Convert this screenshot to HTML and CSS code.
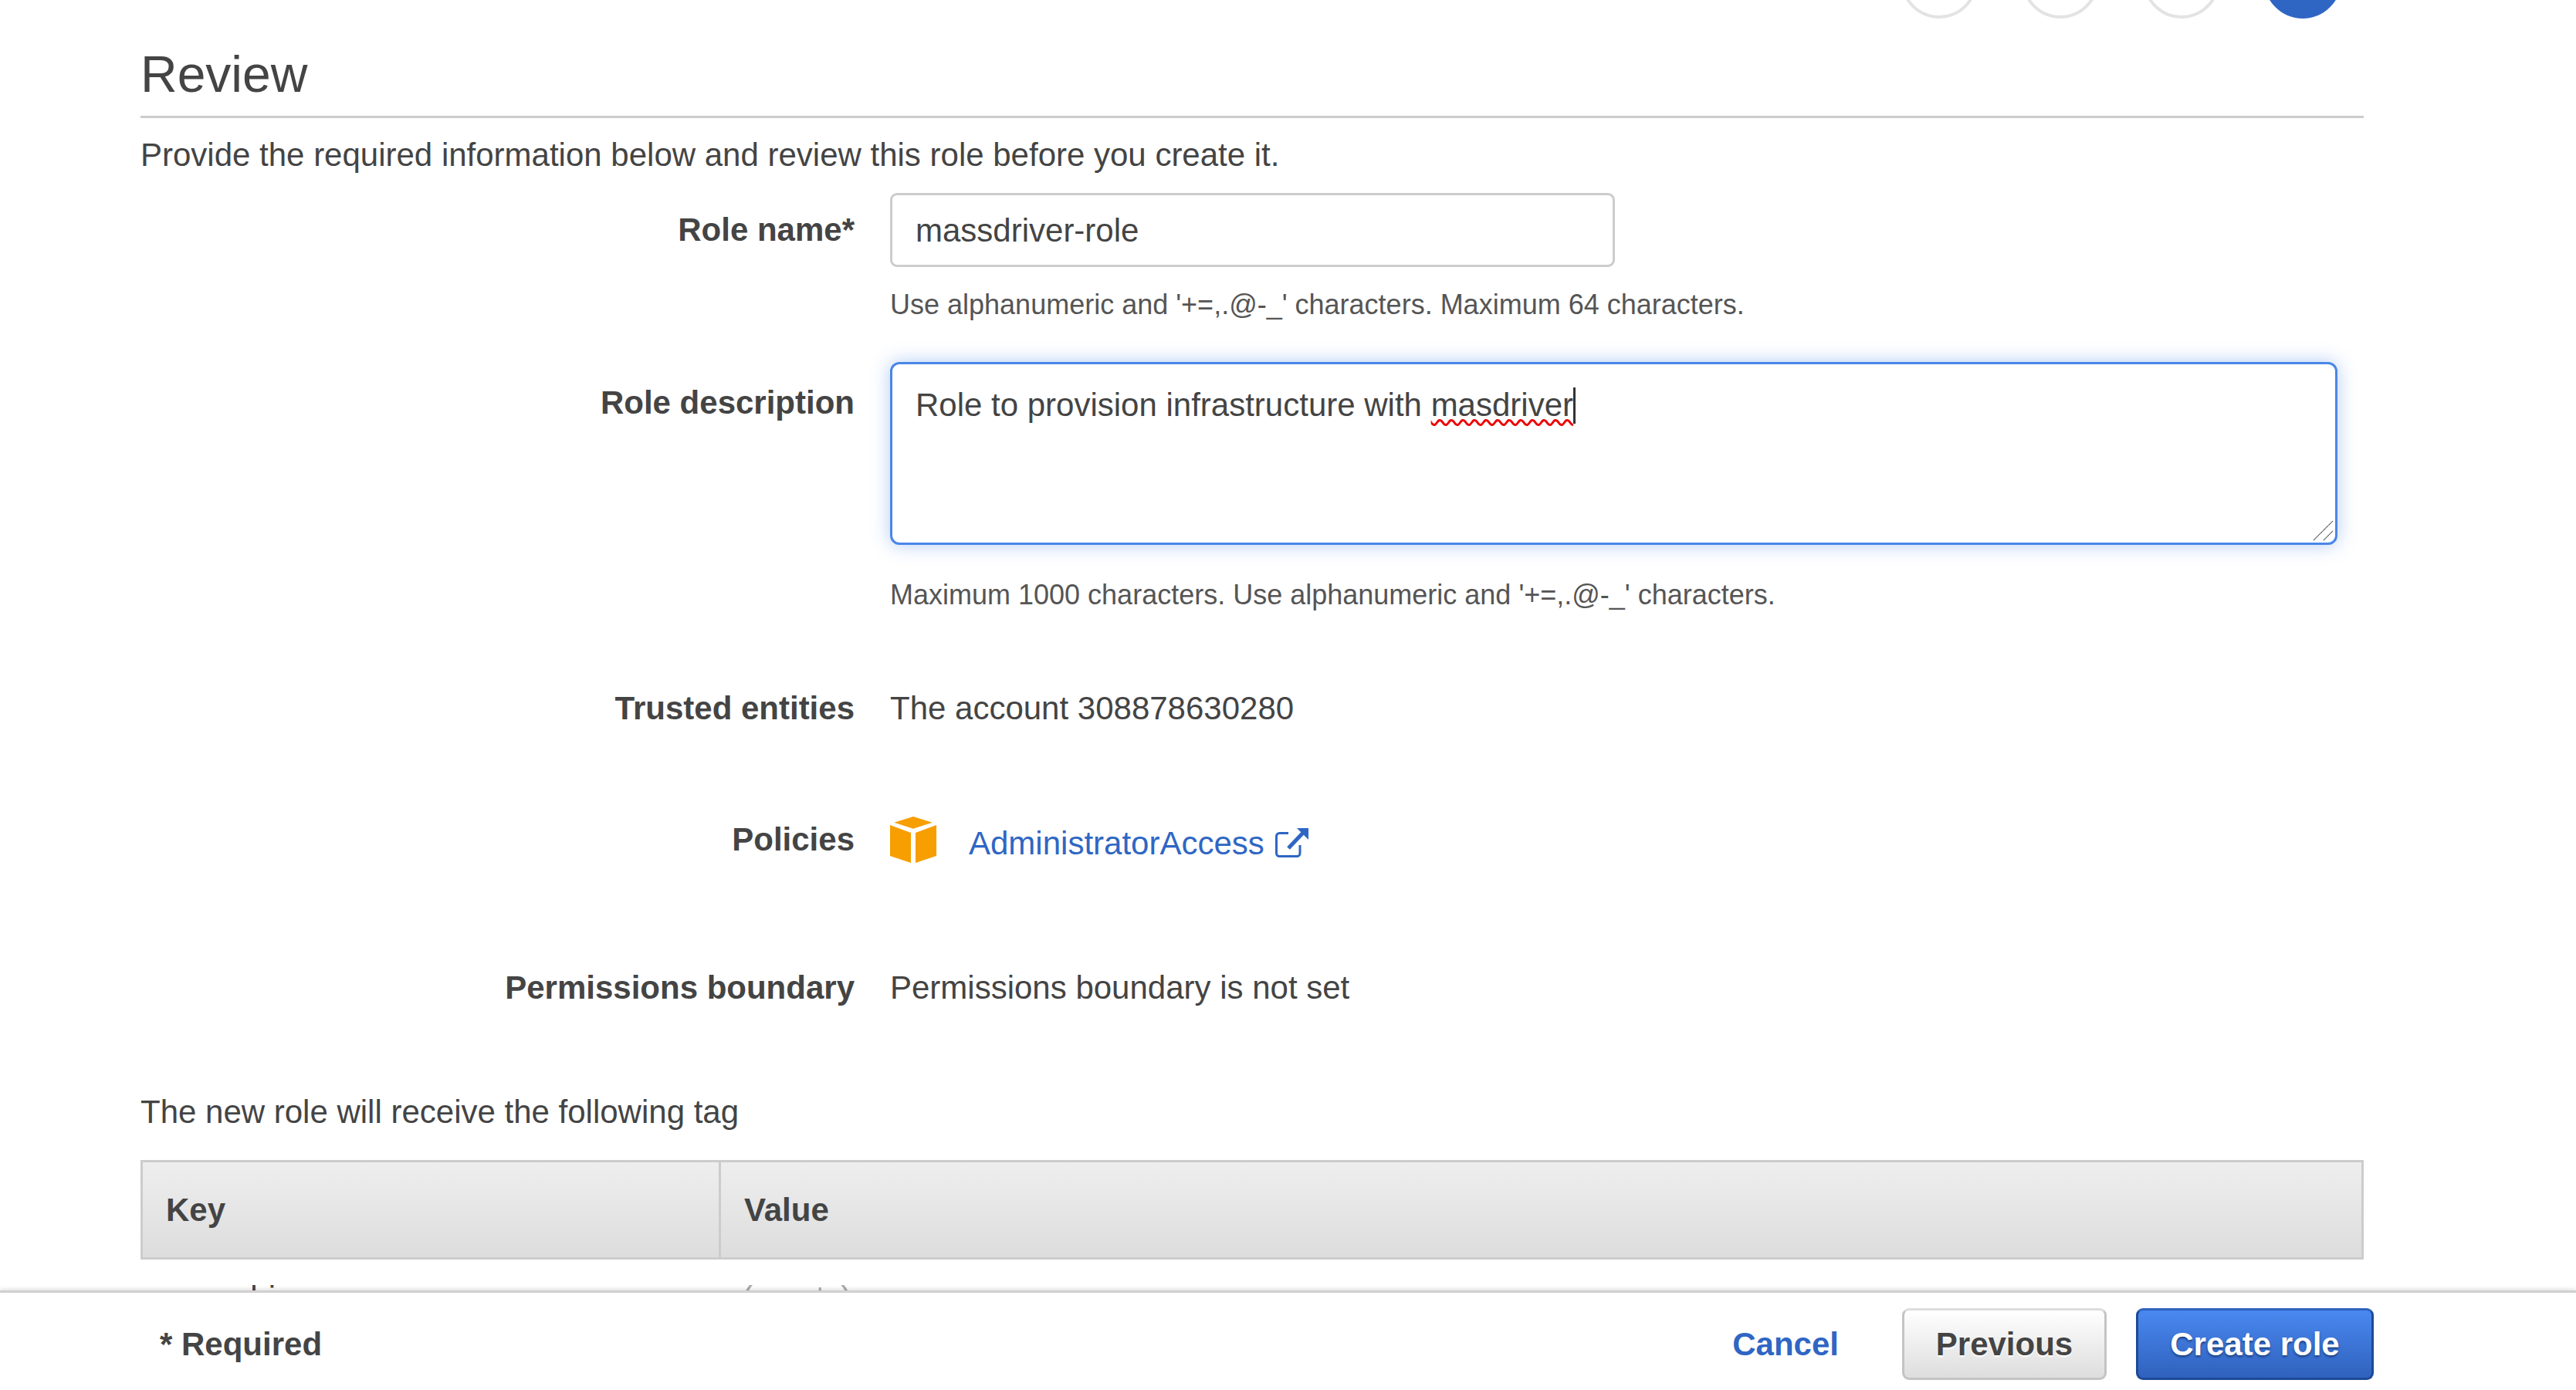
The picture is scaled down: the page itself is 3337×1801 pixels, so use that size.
FILE: index.html
```html
<!DOCTYPE html>
<html lang="en">
<head>
<meta charset="utf-8">
<title>Review</title>
<link rel="stylesheet" href="styles.css">
</head>
<body>
<main class="page">
  <div class="steps">
    <span class="step"></span><span class="step"></span><span class="step"></span><span class="step step-current"></span>
  </div>
  <h1 class="title">Review</h1>
  <p class="intro">Provide the required information below and review this role before you create it.</p>

  <div class="row row-name">
    <div class="label">Role name*</div>
    <div class="value">
      <div class="input">massdriver-role</div>
      <div class="hint">Use alphanumeric and '+=,.@-_' characters. Maximum 64 characters.</div>
    </div>
  </div>

  <div class="row row-desc">
    <div class="label">Role description</div>
    <div class="value">
      <div class="textarea">Role to provision infrastructure with <span class="misspelt">masdriver</span><span class="caret"></span>
        <svg class="grip" width="26" height="26" viewBox="0 0 26 26"><path d="M0 25 25 0M13 25 25 13" stroke="#444" stroke-width="1.200" stroke-dasharray="1.5 .5" fill="none"/></svg>
      </div>
      <div class="hint">Maximum 1000 characters. Use alphanumeric and '+=,.@-_' characters.</div>
    </div>
  </div>

  <div class="row row-trusted">
    <div class="label">Trusted entities</div>
    <div class="value">The account 308878630280</div>
  </div>

  <div class="row row-policies">
    <div class="label">Policies</div>
    <div class="value policy">
      <svg class="cube" width="60" height="60" viewBox="0 0 60 60"><path fill="#f79e00" d="M5.300 7.700 30 0l24.700 7.700L30 15.700zM0 11l27 10v39L0 51zM33 21l27-10v40l-27 9z"/></svg>
      <a class="link" href="#">AdministratorAccess</a>
      <svg class="ext" width="43" height="38" viewBox="0 0 43 38"><path fill="none" stroke="#2f66c4" stroke-width="3" d="M17 6.500H5.500a4 4 0 0 0-4 4V32.500a4 4 0 0 0 4 4H28a4 4 0 0 0 4-4V22"/><path fill="none" stroke="#2f66c4" stroke-width="5" d="M17 26 36 6"/><path fill="#2f66c4" d="M28 0h15v15z"/></svg>
    </div>
  </div>

  <div class="row row-boundary">
    <div class="label">Permissions boundary</div>
    <div class="value">Permissions boundary is not set</div>
  </div>

  <p class="tag-intro">The new role will receive the following tag</p>
  <div class="tags">
    <div class="tags-head">
      <div class="tags-key">Key</div>
      <div class="tags-val">Value</div>
    </div>
    <div class="tags-row">
      <div class="tags-key">massdriver</div>
      <div class="tags-val muted">(empty)</div>
    </div>
  </div>
</main>

<footer class="footer">
  <div class="required">* Required</div>
  <div class="actions">
    <a class="cancel" href="#">Cancel</a>
    <button class="btn btn-prev" type="button">Previous</button>
    <button class="btn btn-create" type="button">Create role</button>
  </div>
</footer>
</body>
</html>
```

FILE: styles.css
```css
* { box-sizing: border-box; }
html, body { margin: 0; height: 100%; }
body {
  position: relative;
  width: 3337px;
  height: 1801px;
  overflow: hidden;
  background: #fff;
  color: #444;
  font-family: "Liberation Sans", Arial, sans-serif;
  font-size: 42px;
  line-height: 60px;
}
.page { width: 3062px; padding-left: 182px; }

.steps { display: flex; justify-content: flex-end; gap: 57px; height: 24px; overflow: hidden; align-items: flex-end; padding-right: 29px; }
.step { flex: none; width: 100px; height: 100px; border: 4px solid #e3e3e3; border-radius: 50%; background: #fff; }
.step-current { background: #2f66c4; border-color: #2f66c4; }

.title { margin: 30px 0 0; height: 99px; font-size: 66px; font-weight: 400; line-height: 84px; border-bottom: 3px solid #ccc; }
.intro { margin: 18px 0 0; height: 60px; }

.row { display: grid; grid-template-columns: 925px 1fr; column-gap: 46px; }
.label { text-align: right; font-weight: 700; }
.row-name { margin-top: 19px; }
.row-name .label { padding-top: 18px; }
.row-desc { margin-top: 49px; }
.row-desc .label { padding-top: 23px; }
.row-trusted { margin-top: 92px; }
.row-policies { margin-top: 110px; }
.row-boundary { margin-top: 132px; }

.input { width: 939px; height: 96px; padding: 0 30px; line-height: 92px; border: 3px solid #ccc; border-radius: 9px; background: #fff; }
.hint { font-size: 36px; line-height: 50px; color: #555; margin-top: 24px; }
.textarea { position: relative; width: 1875px; height: 237px; padding: 22px 30px; line-height: 62px; border: 3px solid #4a86e8; border-radius: 12px; background: #fff; box-shadow: 0 0 24px rgba(74, 134, 232, .42); }
.row-desc .hint { margin-top: 40px; }
.misspelt { text-decoration: underline wavy #e00; text-decoration-thickness: 3px; text-underline-offset: 4px; }
.caret { display: inline-block; width: 3px; height: 47px; background: #333; vertical-align: -10px; }
.grip { position: absolute; right: 2px; bottom: 2px; }

.policy { display: flex; align-items: center; height: 60px; }
.cube { flex: none; margin-right: 42px; }
.link { color: #2f66c4; text-decoration: none; margin-top: 10px; }
.ext { flex: none; margin-left: 14px; margin-top: 8px; }

.tag-intro { margin: 101px 0 0; height: 60px; }
.tags { margin-top: 32px; }
.tags-head { display: flex; height: 129px; border: 3px solid #ccc; background: linear-gradient(#eee, #ddd); font-weight: 700; line-height: 123px; }
.tags-head .tags-key { border-right: 3px solid #ccc; }
.tags-key { flex: none; width: 749px; padding-left: 30px; }
.tags-val { padding-left: 30px; }
.tags-row { display: flex; height: 60px; padding-top: 20px; line-height: 60px; }
.tags-row .tags-key { padding-left: 28px; }
.muted { color: #aaa; }

.footer {
  position: absolute;
  left: 0; right: 0; bottom: 0;
  height: 129px;
  display: flex;
  justify-content: space-between;
  align-items: center;
  padding: 7px 262px 0 207px;
  background: #fff;
  border-top: 3px solid #d0d0d0;
  box-shadow: 0 -2px 5px rgba(0, 0, 0, .12);
  font-weight: 700;
}
.actions { display: flex; align-items: center; gap: 38px; }
.cancel { color: #2f66c4; text-decoration: none; margin-right: 44px; }
.btn { height: 93px; border-radius: 9px; font: inherit; font-weight: 700; padding: 0; cursor: pointer; }
.btn-prev { width: 265px; color: #444; background: linear-gradient(#fff, #ddd); border: 3px solid #c4c4c4; border-top-color: #ddd; text-shadow: 0 2px 2px #fff; }
.btn-create { width: 308px; color: #fff; background: linear-gradient(#4a88f0, #2f62bd); border: 3px solid #1d4a96; border-top-color: #2f62bd; text-shadow: 0 2px 3px #1a3c78; }
```
